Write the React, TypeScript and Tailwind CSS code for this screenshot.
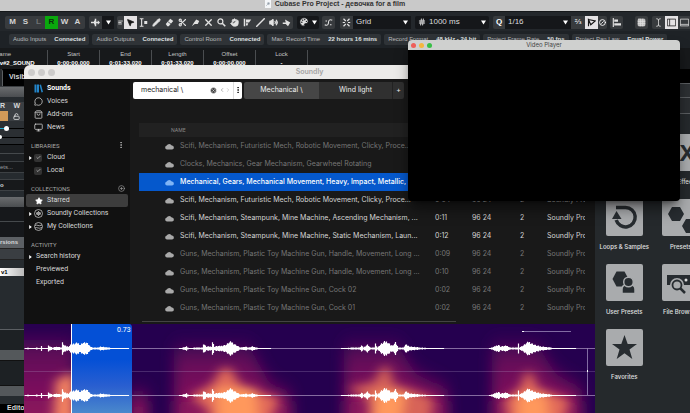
import { useState } from 'react';
import type { ReactNode } from 'react';
import clsx from 'clsx';
import {
  AudioLines,
  Eraser,
  Hand,
  Hash,
  MessageCircle,
  Monitor,
  MousePointer2,
  Palette,
  Pencil,
  Scissors,
  Search,
  ShoppingBag,
  Slash,
  Star,
  TextCursor,
  Volume2,
  X,
  Check,
  CircleX,
  CirclePlus,
  ChevronLeft,
  ChevronRight,
  EllipsisVertical,
  AlignLeft,
  Grid3x3,
  CircleSlash,
  LockOpen,
  Wand,
} from 'lucide-react';

const statusItems = [
  ['Audio Inputs', 'Connected'],
  ['Audio Outputs', 'Connected'],
  ['Control Room', 'Connected'],
  ['Max. Record Time', '22 hours 16 mins'],
  ['Record Format', '48 kHz - 24 bit'],
  ['Project Frame Rate', '50 fps'],
  ['Project Pan Law', 'Equal Power'],
];

const infoItems = [
  ['Start', '0:00:00.000'],
  ['End', '0:01:33.020'],
  ['Length', '0:01:33.020'],
  ['Offset', '0:00:00.000'],
  ['Lock', '-'],
];

const sounds = [
  { name: 'Scifi, Mechanism, Futuristic Mech, Robotic Movement, Clicky, Proce...', time: '0:05', dim: true },
  { name: 'Clocks, Mechanics, Gear Mechanism, Gearwheel Rotating', time: '0:08', dim: true },
  { name: 'Mechanical, Gears, Mechanical Movement, Heavy, Impact, Metallic, ...', time: '0:01', selected: true },
  { name: 'Scifi, Mechanism, Futuristic Mech, Robotic Movement, Clicky, Proce...', time: '0:04' },
  { name: 'Scifi, Mechanism, Steampunk, Mine Machine, Ascending Mechanism, ...', time: '0:11' },
  { name: 'Scifi, Mechanism, Steampunk, Mine Machine, Static Mechanism, Laun...', time: '0:12' },
  { name: 'Guns, Mechanism, Plastic Toy Machine Gun, Handle, Movement, Long ...', time: '0:09', dim: true },
  { name: 'Guns, Mechanism, Plastic Toy Machine Gun, Handle, Movement, Long ...', time: '0:10', dim: true },
  { name: 'Guns, Mechanism, Plastic Toy Machine Gun, Cock 02', time: '0:02', dim: true },
  { name: 'Guns, Mechanism, Plastic Toy Machine Gun, Cock 01', time: '0:02', dim: true },
];

// [x, amplitude] pairs, straight lines in between
const hits: number[][][] = [
  [[1, 0], [3, 1], [8, 0], [12, 1], [16, 0], [17, 3], [18, 0], [23, 0], [24, 3], [28, 1], [33, 2], [37, 1], [38, 6], [40, 3], [44, 2], [46, 4], [50, 5], [53, 6], [56, 4], [58, 6], [62, 6], [65, 3], [68, 1], [74, 1], [76, 2], [84, 1], [90, 0], [104, 0]],
  [[155, 0], [162, 2], [165, 0], [170, 1], [178, 1], [179, 5], [182, 2], [187, 2], [188, 7], [190, 2], [198, 3], [202, 4], [204, 6], [207, 7], [211, 4], [216, 1], [221, 2], [224, 1], [228, 2], [236, 0], [246, 0]],
  [[317, 0], [328, 1], [335, 1], [337, 3], [339, 1], [343, 4], [346, 1], [350, 1], [351, 5], [353, 1], [357, 5], [360, 7], [363, 7], [366, 4], [368, 3], [371, 6], [374, 1], [379, 1], [381, 4], [386, 2], [396, 1], [410, 0], [419, 0]],
  [[465, 0], [472, 3], [474, 4], [476, 2], [482, 3], [486, 1], [493, 1], [494, 5], [495, 1], [500, 4], [504, 7], [508, 5], [512, 3], [518, 2], [526, 1], [533, 0], [551, 0]],
];

function amplitudeAt(points: number[][], x: number) {
  for (let i = 1; i < points.length; i++) {
    const [x0, a0] = points[i - 1];
    const [x1, a1] = points[i];
    if (x <= x1) return a0 + ((a1 - a0) * (x - x0)) / (x1 - x0);
  }
  return 0;
}

function wavePath(points: number[][], y: number) {
  let d = '';
  const end = points[points.length - 1][0];
  for (let x = points[0][0]; x <= end; x++) {
    const wobble = 0.75 + ((x * 37) % 11) / 30;
    const a = Math.max(0.5, amplitudeAt(points, x) * wobble);
    d += `M${x + 0.5} ${(y - a).toFixed(1)}V${(y + a).toFixed(1)}`;
  }
  return d;
}

function Caret() {
  return (
    <svg viewBox="0 0 6 6" className="size-[5px] shrink-0 fill-white">
      <path d="M0 0.5h6L3 5.5z" />
    </svg>
  );
}

function Tool({ children, active, label }: { children: ReactNode; active?: boolean; label: string }) {
  return (
    <button
      aria-label={label}
      className={clsx(
        'flex h-[13px] w-[13px] shrink-0 items-center justify-center',
        active ? 'bg-[#e4e2e4] text-[#151515]' : 'text-[#e2e2e2]',
      )}
    >
      {children}
    </button>
  );
}

function Toolbar() {
  const icon = 'size-[9px]';
  return (
    <div className="flex h-[20px] items-center overflow-hidden border-t border-[#15181a] bg-[#23272b] pt-px pl-[5px] text-[8px] whitespace-nowrap">
      <div className="flex shrink-0 rounded-xs bg-[#383b3e] px-px font-bold text-[#d4d4d4]">
        {['M', 'S', 'L', 'R', 'W', 'A'].map((k) => (
          <button
            key={k}
            className={clsx(
              'flex h-[13px] w-[13px] items-center justify-center',
              k === 'L' && 'text-[#6f7274]',
              k === 'R' && 'bg-[#0aa80d] text-[#0b2e0b]',
            )}
          >
            {k}
          </button>
        ))}
      </div>
      <div className="ml-1 flex shrink-0 items-center rounded-xs bg-[#383b3e]">
        <Tool label="Auto-scroll">
          <svg viewBox="0 0 12 12" className={icon}>
            <path d="M5 1h2v10H5zM0 5h4V3l3 3-3 3V7H0zM7 5h2V3l3 3-3 3V7H7z" fill="currentColor" />
          </svg>
        </Tool>
        <button aria-label="Auto-scroll settings" className="flex h-[13px] w-3 items-center justify-center bg-[#15171a]"><Caret /></button>
      </div>
      <div className="ml-[3px] flex shrink-0 items-center rounded-xs bg-[#383b3e]">
        <span className="flex w-[7px] justify-center">
          <AlignLeft className="size-[5px]" color="#ddd" strokeWidth={4} />
        </span>
        <Tool label="Select" active><MousePointer2 className={icon} fill="currentColor" /></Tool>
        <Tool label="Range">
          <svg viewBox="0 0 12 12" className={icon}>
            <path d="M1 1h5M3.500 1v10M1 11h5" stroke="currentColor" strokeWidth="1.500" />
            <path d="M7 4h4v4H7z" fill="currentColor" />
          </svg>
        </Tool>
        <Tool label="Draw">
          <Pencil className={icon} fill="currentColor" />
        </Tool>
        <Tool label="Erase">
          <svg viewBox="0 0 12 12" className={icon}>
            <path d="M1 8l6-7 4 3-6 7H3z" fill="currentColor" />
            <path d="M4 5l4 3" stroke="#383b3e" />
          </svg>
        </Tool>
        <Tool label="Split"><Scissors className={icon} strokeWidth={3} /></Tool>
        <Tool label="Glue">
          <svg viewBox="0 0 12 12" className={icon}><path d="M1 11l3-5 3-4 4 2-2 4-4 0z" fill="currentColor" /></svg>
        </Tool>
        <Tool label="Mute"><X className="size-[11px]" strokeWidth={3} /></Tool>
        <Tool label="Zoom">
          <svg viewBox="0 0 12 12" className={icon} fill="none" stroke="currentColor">
            <circle cx="4.500" cy="4.500" r="3.300" strokeWidth="1.600" />
            <path d="M7 7l4 4" strokeWidth="2.200" />
          </svg>
        </Tool>
        <Tool label="Comp"><Hand className={icon} fill="currentColor" /></Tool>
        <Tool label="Time warp">
          <svg viewBox="0 0 12 12" className={icon}><path d="M1 1h2v10H1zM4 2h7L8 6H4zM4 7h3l-1 3H4z" fill="currentColor" /></svg>
        </Tool>
        <Tool label="Line"><Slash className={icon} strokeWidth={4} /></Tool>
        <Tool label="Play"><Volume2 className={icon} fill="currentColor" strokeWidth={3} /></Tool>
        <Tool label="Colour">
          <svg viewBox="0 0 12 12" className={icon}><path d="M1 6h4L4 2l7 4-3 5-3-3H1z" fill="currentColor" /></svg>
        </Tool>
      </div>
      <div className="ml-1 flex shrink-0 items-center rounded-xs bg-[#15171a]">
        <Tool label="Colour palette"><Palette className="size-[10px]" fill="currentColor" stroke="#15171a" /></Tool>
        <span className="flex w-[9px] justify-center"><Caret /></span>
      </div>
      <div className="ml-[3px] flex shrink-0 rounded-xs bg-[#383b3e]">
        <Tool label="Snap to zero crossing">
          <svg viewBox="0 0 12 12" className={icon}>
            <path d="M1 9c4 2 5-1 5-3s1-5 5-3M2 4h2M8 9h2" stroke="currentColor" strokeWidth="1.4" fill="none" />
          </svg>
        </Tool>
      </div>
      <div className="ml-[5px] flex shrink-0 items-center rounded-xs bg-[#383b3e]">
        <Tool label="Snap">
          <svg viewBox="0 0 12 12" className={icon}>
            <path d="M2 1l3 3M10 1L7 4M2 11l3-3M10 11L7 8M1 6h3M8 6h3" stroke="currentColor" strokeWidth="1.6" />
          </svg>
        </Tool>
        <button className="flex h-[13px] w-[58px] items-center justify-between bg-[#15171a] px-[3px] text-[#dcdcdc]">
          Grid <Caret />
        </button>
      </div>
      <button className="ml-1 flex h-[13px] w-[74px] shrink-0 items-center gap-[3px] rounded-xs bg-[#15171a] px-[3px] text-[#dcdcdc]">
        <Hash className="size-[8px]" strokeWidth={3} />
        <span className="grow text-left">1000 ms</span>
        <Caret />
      </button>
      <div className="ml-1 flex shrink-0 items-center rounded-xs bg-[#383b3e]">
        <button className="flex h-[13px] w-3 items-center justify-center font-bold text-white">Q</button>
        <button className="flex h-[13px] w-[66px] items-center justify-between bg-[#15171a] px-[3px] text-[#dcdcdc]">
          1/16 <Caret />
        </button>
        <button className="flex h-[13px] w-[14px] items-center justify-center text-white">⅔</button>
        <Tool label="Iterative quantize" active>
          <svg viewBox="0 0 12 12" className={icon}>
            <path d="M2 1v10M2 2l9 2-6 5z" stroke="currentColor" strokeWidth="1.5" fill="none" />
          </svg>
        </Tool>
        <button className="flex h-[13px] w-[9px] items-center justify-center text-white" aria-label="Edit quantize">
          <CircleSlash className="size-[7px]" strokeWidth={3} />
        </button>
      </div>
      <div className="ml-[3px] flex shrink-0 rounded-xs bg-[#383b3e]">
        <Tool label="Align"><svg viewBox="0 0 12 12" className={icon}><path d="M1 0h1.500v12H1zM3 2h5v3H3zM3 7h9v3H3z" fill="currentColor" /></svg></Tool>
      </div>
      <div className="ml-3 flex shrink-0 rounded-xs bg-[#383b3e]">
        <Tool label="Media bay"><Grid3x3 className={icon} fill="#bbb" strokeWidth={2} /></Tool>
      </div>
      <div className="ml-1 flex shrink-0 rounded-xs bg-[#383b3e]">
        <Tool label="Layout"><TextCursor className={icon} strokeWidth={2} /></Tool>
        <Tool label="Left zone" active>
          <svg viewBox="0 0 12 12" className={icon}><path d="M0.500 1.500h11v9h-11zM3.500 1.500v9" stroke="currentColor" fill="none" /></svg>
        </Tool>
        <Tool label="Lower zone">
          <svg viewBox="0 0 12 12" className={icon}><path d="M0.500 1.500h11v9h-11zM0.500 8.500h11" stroke="currentColor" fill="none" /></svg>
        </Tool>
      </div>
    </div>
  );
}

function StatusLine() {
  return (
    <div className="flex h-[17px] items-center gap-[3px] overflow-hidden bg-[#1e2226] pl-[9px] text-[6px] whitespace-nowrap">
      {statusItems.map(([label, value]) => (
        <div key={label} className="flex h-[11px] shrink-0 items-center gap-2 rounded-xs bg-[#2f3337] px-1 text-[#b9bbbd]">
          <span>{label}</span>
          <b className="text-[#dfe0e1]">{value}</b>
        </div>
      ))}
    </div>
  );
}

function InfoLine() {
  return (
    <div className="flex h-[21px] overflow-hidden bg-[#17191b] pt-[2px] text-[6px] leading-[9px] whitespace-nowrap text-[#c4c5c6]">
      <div className="-ml-1 w-[52px] shrink-0 border-r border-[#4a4d50]">
        <div className="-ml-px">Name</div>
        <b className="block text-white">ov#2_SOUND</b>
      </div>
      {infoItems.map(([label, value]) => (
        <div key={label} className="w-[52px] shrink-0 border-r border-[#4a4d50] text-center">
          <div>{label}</div>
          <b className="block text-white">{value}</b>
        </div>
      ))}
    </div>
  );
}

function Inspector() {
  return (
    <div className="flex w-6 shrink-0 flex-col overflow-hidden bg-[#262b2f] text-[6px] whitespace-nowrap text-[#d7d8d9]">
      <div className="flex h-[18px] items-center gap-[6px] border-b border-[#3b3e41] bg-black text-[7px] font-bold">
        <span className="h-full w-[3px] shrink-0 rounded-tr-sm border-r border-[#5b5e61] bg-[#26292c]" />
        Visibility
      </div>
      <div className="h-[10px] bg-linear-to-b from-[#6a6c6e] to-[#4a4d50]" />
      <div className="h-[5px]" />
      <div className="flex h-[9px] items-center justify-between bg-[#3b3f43] pr-1 text-[7px] font-bold">
        <span>R</span>
        <span>W</span>
      </div>
      <div className="flex h-[10px] items-center justify-between bg-[#3b3f43] pr-1">
        <span className="h-full w-2 bg-[#d29a58]" />
        <LockOpen className="size-[7px]" strokeWidth={3} />
      </div>
      <div className="flex h-6 flex-col justify-evenly border-b border-black bg-[#2b2f33]">
        <div className="flex items-center">
          <span className="h-px w-1 bg-[#22a8cc]" />
          <span className="size-[5px] rounded-full bg-white" />
          <span className="h-px grow bg-black" />
        </div>
        <div className="flex items-center">
          <span className="h-[4px] w-[2px] rounded-r-full bg-white" />
          <span className="h-px grow bg-black" />
        </div>
      </div>
      <div className="h-2 bg-[#1d2023]" />
      <div className="h-2 border-t border-[#45494c] bg-[#1d2023]" />
      <div className="flex h-3 items-center border-y border-[#3d4144] bg-[#17191b] text-[#9a9c9e]">ets...</div>
      <div className="h-[6px]" />
      <div className="flex h-3 items-center border-y border-[#3d4144] bg-[#17191b] font-bold">o</div>
      <div className="h-[6px]" />
      <div className="h-[10px] bg-linear-to-b from-[#6a6c6e] to-[#4a4d50]" />
      <div className="h-[15px] border-b border-[#45494c] bg-[#16181b]" />
      <div className="h-[15px] bg-[#16181b]" />
      <div className="flex h-[11px] items-center bg-[#5c6064] text-[6px] font-bold">rsions</div>
      <div className="h-3 border-y border-[#222] bg-[#3a3e42]" />
      <div className="h-2" />
      <div className="flex h-2 items-center bg-linear-to-r from-white to-[#b9b9b9] pl-px font-bold text-black">v1</div>
      <div className="h-[54px] border-b border-[#5b5f63]" />
      <div className="h-5 bg-[#1d2124]" />
      <div className="h-[10px] bg-[#54585b]" />
      <div className="h-[26px] border-y border-[#111] bg-[#1d2124]" />
      <div className="h-[10px] bg-[#54585b]" />
      <div className="h-2" />
      <div className="flex grow items-start bg-black pl-[7px] text-[7px] leading-[8px] font-bold">Editor</div>
    </div>
  );
}

function MediaTile({ label, children }: { label: string; children: ReactNode }) {
  return (
    <button className="flex h-[65px] flex-col items-center gap-[7px] font-['Inter',sans-serif] text-[6px] leading-[8px] font-medium whitespace-nowrap text-[#e0e1e2]">
      <span className="flex size-[37px] items-center justify-center overflow-hidden rounded-xs bg-[#a9abad] text-[#272c30]">
        {children}
      </span>
      {label}
    </button>
  );
}

function MediaRack() {
  return (
    <div className="w-[95px] shrink-0 overflow-hidden bg-[#25292c]">
      <div className="h-[14px] bg-black" />
      <div className="h-[15px] border-y border-[#5a5d60] bg-[#2d3033]" />
      <div className="h-[16px] border-b border-[#5a5d60] bg-[#2a2d30]" />
      <div className="h-[20px]" />
      <div className="grid w-[114px] grid-cols-2 pl-px">
        <MediaTile label="VST Instruments"><AudioLines className="size-6" /></MediaTile>
        <MediaTile label="VST Effects"><b className="text-[22px]">FX</b></MediaTile>
        <MediaTile label="Loops &amp; Samples">
          <svg viewBox="0 0 37 37" className="size-full">
            <path d="M10 8.500H19.500A9.700 9.700 0 1 1 10.200 21" fill="none" stroke="currentColor" strokeWidth="3.500" />
            <path d="M6 20l4.500-8 5 8z" fill="currentColor" />
          </svg>
        </MediaTile>
        <MediaTile label="Presets">
          <svg viewBox="0 0 37 37" className="size-full" fill="currentColor">
            <path d="M10 8h8l4 7-4 7h-8l-4-7zM24 20h8l4 7-4 7h-8l-4-7z" />
          </svg>
        </MediaTile>
        <MediaTile label="User Presets">
          <svg viewBox="0 0 37 37" className="size-full" fill="currentColor">
            <path d="M10.500 7.500h8l4 7.500-4 7.500h-8L6.500 15z" />
            <g stroke="#a9abad" strokeWidth="1.500">
              <path d="M16 29.500v-4c0-3 2-4.500 4-4.500h5c2.500 0 4 1.500 4 4.500v4z" />
              <circle cx="22.500" cy="18" r="4.800" />
            </g>
          </svg>
        </MediaTile>
        <MediaTile label="File Browser">
          <svg viewBox="0 0 37 37" className="size-full">
            <path d="M5 11h32v10H5z" fill="currentColor" />
            <circle cx="24" cy="16" r="1.500" fill="#ddd" />
            <circle cx="15" cy="21" r="5" fill="#a9abad" stroke="#a9abad" strokeWidth="4" />
            <circle cx="15" cy="21" r="4.500" fill="none" stroke="currentColor" strokeWidth="1.800" />
            <path d="M18 24l5 5" stroke="currentColor" strokeWidth="2.500" />
          </svg>
        </MediaTile>
        <MediaTile label="Favorites">
          <svg viewBox="0 0 37 37" className="size-full">
            <path d="M18.500 6l3.200 9H31l-7.500 5.600 2.800 9.400-7.800-5.700L10.700 30l2.800-9.400L6 15h9.300z" fill="currentColor" />
          </svg>
        </MediaTile>
      </div>
    </div>
  );
}

function Disclosure({ show }: { show?: boolean }) {
  return (
    <span className="flex w-2 shrink-0 justify-center">
      {show && <svg viewBox="0 0 4 6" className="h-[4px] w-[3px] fill-white"><path d="M0 0l4 3-4 3z" /></svg>}
    </span>
  );
}

function SideItem({ icon, label, arrow, active, bold }: { icon?: ReactNode; label: string; arrow?: boolean; active?: boolean; bold?: boolean }) {
  return (
    <a
      href="#"
      className={clsx(
        'mx-[2px] flex h-[13px] items-center rounded-xs text-[#d6d6d6]',
        active && 'bg-[#3d3d3d]',
        bold && 'font-bold text-white',
      )}
    >
      <Disclosure show={arrow} />
      {icon && <span className="mr-1 flex w-[9px] shrink-0 justify-center">{icon}</span>}
      <span className={clsx(!icon && 'pl-[2px]')}>{label}</span>
    </a>
  );
}

function SideHeading({ children, action }: { children: string; action?: ReactNode }) {
  return (
    <div className="mt-[5px] flex h-3 items-center justify-between pr-[5px] pl-[7px] text-[6px] text-[#a8a8a8]">
      {children}
      {action}
    </div>
  );
}

function LibraryItem({ label, arrow }: { label: string; arrow?: boolean }) {
  const [on, setOn] = useState(true);
  return (
    <label className="mx-[2px] flex h-[13px] items-center text-[#d6d6d6]">
      <Disclosure show={arrow} />
      <span className="mr-[5px] grid size-2 place-items-center rounded-xs bg-[#333]">
        <input
          type="checkbox"
          checked={on}
          onChange={() => setOn(!on)}
          className="col-start-1 row-start-1 size-2 appearance-none"
        />
        {on && <Check className="pointer-events-none col-start-1 row-start-1 size-[5px]" strokeWidth={3} />}
      </span>
      {label}
    </label>
  );
}

function Sidebar() {
  const icon = 'size-[9px]';
  return (
    <nav className="w-[106px] shrink-0 bg-[#111] pt-[3px] text-[7px]">
      <SideItem
        bold
        icon={
          <svg viewBox="0 0 18 18" className={icon} fill="#2384c8">
            <path d="M1 1h4v16H1zM6 1h4v16H6zM11 2l3-1 4 15-3 1z" />
          </svg>
        }
        label="Sounds"
      />
      <SideItem icon={<MessageCircle className={icon} />} label="Voices" />
      <SideItem icon={<ShoppingBag className={icon} />} label="Add-ons" />
      <SideItem icon={<Monitor className={icon} />} label="News" />
      <SideHeading action={<EllipsisVertical className="size-2" strokeWidth={3} />}>LIBRARIES</SideHeading>
      <LibraryItem label="Cloud" arrow />
      <LibraryItem label="Local" />
      <SideHeading action={<CirclePlus className="size-[7px]" />}>COLLECTIONS</SideHeading>
      <SideItem active icon={<Star className="size-2" color="white" fill="white" />} label="Starred" />
      <SideItem
        arrow
        icon={
          <svg viewBox="0 0 18 18" className={icon} fill="none" stroke="#ccc" strokeWidth="1.500">
            <circle cx="9" cy="9" r="8" />
            <path d="M5 7v4M9 4v10M13 7v4M7 6v6M11 6v6" />
          </svg>
        }
        label="Soundly Collections"
      />
      <SideItem
        arrow
        icon={
          <svg viewBox="0 0 18 18" className={icon} fill="none" stroke="#ccc" strokeWidth="1.500">
            <circle cx="9" cy="9" r="8" />
            <path d="M2 7c4-3 7 3 14-1M2 12c4-3 7 3 14-1" />
          </svg>
        }
        label="My Collections"
      />
      <SideHeading>ACTIVITY</SideHeading>
      <SideItem arrow label="Search history" />
      <SideItem label="Previewed" />
      <SideItem label="Exported" />
    </nav>
  );
}

function SearchBar() {
  const [query, setQuery] = useState('mechanical \\');
  return (
    <div className="flex h-[18px] items-center gap-[2px] pl-[3px] font-['Inter',sans-serif] text-[7px]">
      <div className="flex h-[17px] w-[109px] shrink-0 items-center rounded-xs bg-white pl-2 text-[#222]">
        <input
          aria-label="Search sounds"
          value={query}
          onChange={(e) => setQuery(e.target.value)}
          className="w-0 grow bg-transparent outline-none"
        />
        <button aria-label="Clear" onClick={() => setQuery('')}>
          <CircleX className="size-[7px]" fill="#444" stroke="#eee" />
        </button>
        <button aria-label="Previous" className="ml-[2px] text-[#666]"><ChevronLeft className="size-[6px]" /></button>
        <button aria-label="Next" className="text-[#aaa]"><ChevronRight className="size-[6px]" /></button>
        <button aria-label="Search options" className="ml-[2px] flex h-full items-center border-l border-[#ddd]">
          <EllipsisVertical className="size-[8px]" strokeWidth={3} />
        </button>
      </div>
      <div className="flex h-[17px] shrink-0 overflow-hidden rounded-xs text-[#eee]">
        <button className="w-[75px] bg-[#464646]">Mechanical \</button>
        <button className="w-[73px] bg-[#303030]">Wind light</button>
        <button className="w-3 border-l border-[#222] bg-[#303030]" aria-label="New tab">+</button>
      </div>
    </div>
  );
}

function SoundTable() {
  return (
    <div className="mt-6 overflow-hidden pr-[10px] pl-[9px]">
      <table className="w-full table-fixed border-collapse text-left font-['Inter',sans-serif] text-[7px] leading-[8px] whitespace-nowrap">
        <colgroup>
          <col className="w-[41px]" />
          <col />
          <col className="w-[37px]" />
          <col className="w-[48px]" />
          <col className="w-[27px]" />
          <col className="w-[38px]" />
        </colgroup>
        <thead className="bg-[#212121] text-[5px] text-[#8a8a8a]">
          <tr className="h-[14px]">
            <th colSpan={2} className="pl-8 font-normal">NAME</th>
            <th className="font-normal">TIME</th>
            <th className="font-normal">FORMAT</th>
            <th className="font-normal">CH</th>
            <th className="font-normal">LIBRARY</th>
          </tr>
        </thead>
        <tbody>
          {sounds.map((s, i) => (
            <tr
              key={i}
              className={clsx(
                'h-[18px]',
                s.selected ? 'bg-[#0558cc] font-medium text-white' : s.dim ? 'text-[#767676]' : 'text-[#d6d6d6]',
              )}
            >
              <td className="pl-[26px]">
                <svg
                  viewBox="0 0 18 14"
                  className={clsx('h-[7px] w-[9px]', s.selected ? 'fill-[#7fb4f5]' : 'fill-[#a9a9a9]')}
                >
                  <path d="M4 13a4 4 0 0 1-.5-7.900A5.500 5.500 0 0 1 13.500 5 4 4 0 0 1 14 13z" />
                </svg>
              </td>
              <td className="overflow-hidden">{s.name}</td>
              <td>{s.time}</td>
              <td>96 24</td>
              <td>2</td>
              <td className="overflow-hidden">Soundly Pro</td>
            </tr>
          ))}
        </tbody>
      </table>
      <div className="mt-1 ml-[3px] h-px w-[314px] bg-[#444]" />
    </div>
  );
}

function Spectrogram() {
  return (
    <div className="relative grow overflow-hidden bg-[#25004f]">
      <svg viewBox="0 0 571 89" preserveAspectRatio="none" className="block h-[89px] w-full">
        <defs>
          <filter id="soft" filterUnits="userSpaceOnUse" x="-40" y="-60" width="660" height="240">
            <feGaussianBlur stdDeviation="7 10" />
          </filter>
          <filter id="glow" filterUnits="userSpaceOnUse" x="-40" y="-60" width="660" height="240">
            <feGaussianBlur stdDeviation="6 5" />
          </filter>
          <linearGradient id="haze" gradientUnits="userSpaceOnUse" x1="0" y1="0" x2="0" y2="89">
            <stop offset="0" stopColor="#4a0654" />
            <stop offset="0.5" stopColor="#6a0a5a" />
            <stop offset="1" stopColor="#8c145c" />
          </linearGradient>
          <linearGradient id="region" x1="0" y1="0" x2="0" y2="1">
            <stop offset="0.4" stopColor="#0450d6" />
            <stop offset="0.7" stopColor="#2a5fd0" />
            <stop offset="1" stopColor="#4a88cc" />
          </linearGradient>
        </defs>
        <g filter="url(#soft)" fill="url(#haze)">
          <path d="M-20 16H50V130H-20z" />
          <path d="M105 70H124V130H105z" />
          <path d="M150 24H226L246 60L268 72V130H150z" />
          <path d="M320 22H374L392 50L424 66V130H320z" />
          <path d="M468 22H514L532 50L558 66V130H468z" />
        </g>
        <g filter="url(#glow)">
          <path d="M32 56L50 48V120H28z" fill="#f58460" />
          <path d="M166 72L188 60L198 44L206 44L216 60L234 68L256 74L236 120H192L184 86z" fill="#e87058" fillOpacity="0.95" />
          <path d="M324 64L350 58L359 42L364 42L370 60L400 70L410 76L402 120H348L344 76z" fill="#e06c58" fillOpacity="0.9" />
          <path d="M480 76L496 64L502 48L507 48L514 64L530 70L546 76L532 120H490z" fill="#e87058" fillOpacity="0.95" />
          <path d="M192 64H232L236 120H194z" fill="#ff985c" />
          <path d="M352 68H382L374 120H344z" fill="#ff985c" />
          <path d="M494 70H522L528 120H492z" fill="#ff985c" />
        </g>
        <path d="M0 24.500H571M0 71.500H571" stroke="#b9a4cc" strokeOpacity="0.650" />
        <path d="M0 47.500H571" stroke="#b9a4cc" strokeOpacity="0.250" />
        <path d="M47 0H105Q108 0 108 4V89H47z" fill="url(#region)" />
        <path d="M47 24.500H104M47 71.500H104" stroke="#7fa0e8" />
        {hits.map((points, i) => (
          <path key={i} d={wavePath(points, 24.5) + wavePath(points, 71.5)} stroke="white" strokeWidth="1.2" />
        ))}
        <path d="M47.500 0V89" stroke="white" />
        <path d="M499 7.500H547M563.500 24V71" stroke="#9a86b8" strokeOpacity="0.800" />
        <path d="M498 7h2v1h-2zM563 46h1v2h-1z" fill="white" />
      </svg>
      <span className="absolute top-[2px] left-[93px] text-[7px] leading-[8px] text-white">0.73</span>
    </div>
  );
}

function SoundlyWindow() {
  return (
    <section className="absolute inset-y-0 top-[65px] right-[95px] left-6 flex flex-col overflow-hidden rounded-t-md bg-[#191919] font-['Roboto',sans-serif]">
      <header className="flex h-[14px] shrink-0 items-center bg-[#ecebe9] px-1">
        <div className="flex flex-1 gap-[3px]">
          <span className="size-[7px] rounded-full bg-[#cdcccb]" />
          <span className="size-[7px] rounded-full bg-[#cdcccb]" />
          <span className="size-[7px] rounded-full bg-[#cdcccb]" />
        </div>
        <h1 className="font-['Inter',sans-serif] text-[7px] font-semibold text-[#a5a4a3]">Soundly</h1>
        <div className="flex-1" />
      </header>
      <div className="flex h-[245px] shrink-0">
        <Sidebar />
        <main className="min-w-0 grow pt-[2px]">
          <SearchBar />
          <SoundTable />
        </main>
      </div>
      <Spectrogram />
    </section>
  );
}

function VideoPlayer() {
  return (
    <section className="absolute top-10 right-[10px] flex h-[161px] w-[272px] flex-col overflow-hidden rounded-sm bg-black shadow-lg shadow-black/50">
      <header className="flex h-[10px] items-center bg-[#cfd0cf] px-[3px]">
        <div className="flex flex-1 gap-[3px]">
          <span className="size-[5px] rounded-full bg-[#ee5f5a]" />
          <span className="size-[5px] rounded-full bg-[#f5b63d]" />
          <span className="size-[5px] rounded-full bg-[#38bf46]" />
        </div>
        <h2 className="font-['Inter',sans-serif] text-[6px] leading-[8px] text-[#444]">Video Player</h2>
        <div className="flex-1" />
      </header>
    </section>
  );
}

export default function App() {
  return (
    <div className="relative flex min-h-screen flex-col overflow-hidden bg-[#23282b] font-['Liberation_Sans',Arial,sans-serif]">
      <header className="flex h-[11px] items-start justify-center gap-1 bg-[#c9c9c9] pr-5 text-[7px] leading-[8px] font-bold text-[#333]">
        <span className="flex h-2 w-[6px] items-center justify-center bg-[#f4f6f8]">
          <Wand className="size-[4px]" color="#456" />
        </span>
        Cubase Pro Project - девочка for a film
      </header>
      <Toolbar />
      <StatusLine />
      <InfoLine />
      <div className="flex grow justify-between">
        <Inspector />
        <MediaRack />
      </div>
      <SoundlyWindow />
      <VideoPlayer />
    </div>
  );
}
